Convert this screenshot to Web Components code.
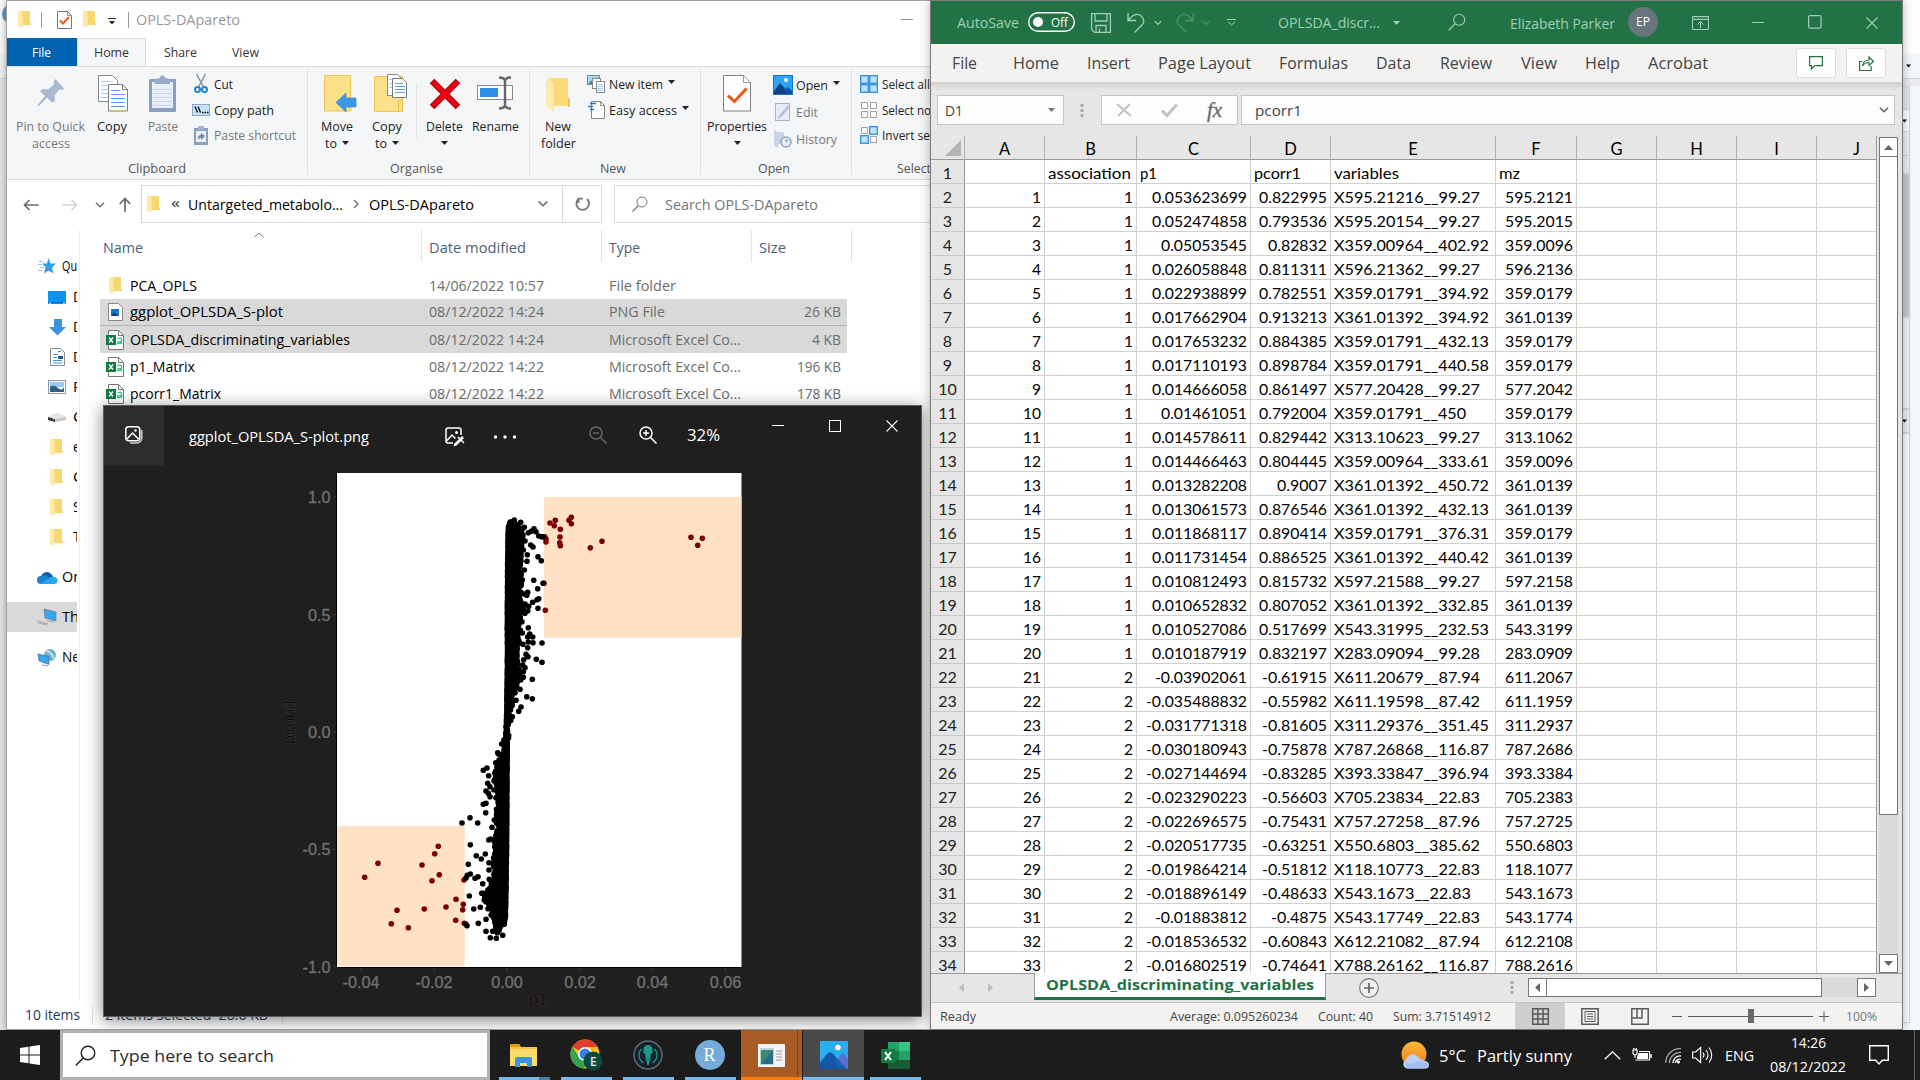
<!DOCTYPE html>
<html lang="en">
<head>
<meta charset="utf-8">
<title>Desktop</title>
<style>
html,body{margin:0;width:1920px;height:1080px;overflow:hidden;background:#e9ebed;font-family:"Open Sans","Noto Sans",sans-serif}
</style>
</head>
<body>
<desk-top></desk-top>
<script>
const ICONS = {
folder:[12,17,'<path d="M3 0h9v12h1v2H3z" fill="#f7d774"/><path d="M0 0h3l1.500 1.500V17L0 15z" fill="#ffe9a6"/>'],
bigfolder:[25,35,'<path d="M3 1h19v19l2 2v7H8z" fill="#fbd979"/><path d="M22 20l2 3v7h-2z" fill="#edc45c"/><path d="M0 1l8 5v29l-8-6z" fill="#ffe9ad"/>'],
checkdoc:[15,18,'<path d="M.5.5h10l4 4v13H.5z" fill="#fff" stroke="#777"/><path d="M10.500.5v4h4" fill="none" stroke="#999"/><path d="M3 9.500l3 3 6-6.500" fill="none" stroke="#f05a1a" stroke-width="2"/>'],
bigcheck:[29,37,'<path d="M.5.5h20l7 7v28.500H.5z" fill="#fdfdfd" stroke="#808080"/><path d="M20.500.5v7h7z" fill="#fff" stroke="#999"/><path d="M5 20.500l6.500 6 12-13" fill="none" stroke="#f0530f" stroke-width="3"/>'],
qat:[8,7,'<path d="M0 .5h8" stroke="#222" fill="none"/><path d="M1 3h6L4 6.500z" fill="#222"/>'],
vline:[1,16,'<path d="M.5 0v16" stroke="#999"/>'],
pin:[28,28,'<path d="M18.500 0l8.500 9.500-1.500 1.500-3-.5-5 6 .5 5-2.500 2.500-5.500-5.500L2 27l-1.500-1L8 17l-5-5 2.500-2 5.500.5 6-5-.5-3z" fill="#a9b9d0"/>'],
copy:[30,37,'<path d="M.5.5h14l5 5v21H.5z" fill="#fff" stroke="#8a8a8a"/><path d="M3 6.500h12M3 10.500h12M3 14.500h12M3 18.500h12M3 22.500h7" stroke="#a8cdf8"/><path d="M10.500 9.500h14l5 5V36H10.500z" fill="#fff" stroke="#808080"/><path d="M24.500 9.500v5h5" fill="none" stroke="#808080"/><path d="M13 15.500h9M13 19.500h14M13 23.500h14M13 27.500h14M13 31.500h14" stroke="#5b9cf0"/>'],
paste:[27,37,'<rect x="0" y="4" width="27" height="33" rx="1" fill="#8b9fc2"/><rect x="3" y="7" width="21" height="26" fill="#e9eef8"/><path d="M4 14.500h19M4 18.500h19M4 22.500h19M4 26.500h19M4 30.500h19" stroke="#cbd6ea"/><path d="M6 9V4l5-1a2.500 2.500 0 0 1 5 0l5 1v5z" fill="#9aabca"/>'],
cut:[14,20,'<path d="M2.500 0l7 13M11.500 0l-7 13" stroke="#8590a0" stroke-width="1.500" fill="none"/><circle cx="3.500" cy="15.500" r="2.500" fill="none" stroke="#1e87cf" stroke-width="2"/><circle cx="10.500" cy="15.500" r="2.500" fill="none" stroke="#1e87cf" stroke-width="2"/>'],
path:[18,12,'<rect x=".5" y=".5" width="17" height="11" fill="#c4e2fb" stroke="#8caac6"/><path d="M3 2.500l2.500 6M6 2.500l2.500 6" stroke="#000" stroke-width="1.300"/><path d="M10 8.500h1.500M12.500 8.500h1.500M15 8.500h1.500" stroke="#000" stroke-width="1.500"/>'],
shortcut:[14,19,'<rect y="2" width="14" height="17" fill="#8b9fc2"/><rect x="2" y="5" width="10" height="11" fill="#e9eef8"/><rect x="4" y="0" width="6" height="4" fill="#a3b2cd"/><path d="M4 14c0-4 1-5 3-5V7l4 3-4 4v-2c-1 0-2 .5-3 2z" fill="#7486ab"/>'],
moveto:[33,37,'<path d="M.5.5h26V36H.5z" fill="#fce08a" stroke="#e9c45c"/><path d="M24 22q3-3 4 1v13h-4z" fill="#fbd873"/><path d="M12 27.500l10-9.500v5h10v9H22v5z" fill="#3c97e8" stroke="#2b7ccb" stroke-width=".6"/>'],
copyto:[33,38,'<path d="M.5 2.500h28V37.500H.5z" fill="#fce08a" stroke="#e9c45c"/><path d="M24.500 37V27q2-3 4 0v10" fill="#fbdf85" stroke="#e9bd4c"/><path d="M13.500.5h10l4 4v17h-14z" fill="#fff" stroke="#888"/><path d="M15 5.500h8M15 9.500h8M15 13.500h5" stroke="#a8cdf8"/><path d="M18.500 4.500h10l4 4v15h-14z" fill="#fff" stroke="#777"/><path d="M21 9.500h8M21 12.500h10M21 15.500h10M21 18.500h10" stroke="#5b9cf0"/>'],
del:[32,32,'<path d="M3 3l26 26M29 3L3 29" stroke="#a40009" stroke-width="6.500"/><path d="M3.500 3.500l25 25M28.500 3.500l-25 25" stroke="#e60012" stroke-width="5"/>'],
rename:[37,34,'<rect x=".5" y="9.500" width="35" height="14" fill="#fff" stroke="#8a8a8a"/><rect x="3" y="12" width="18" height="9" fill="#2f8fe5"/><path d="M22 1.500q6 0 6 4 0-4 6-4M28 5v24M22 32.500q6 0 6-4 0 4 6 4" fill="none" stroke="#666" stroke-width="2.400"/>'],
newitem:[18,18,'<rect x=".5" y=".5" width="12" height="9" fill="#a9d4f4" stroke="#5c93b5"/><path d="M1 9l4-4 4 4z" fill="#4a8a62"/><rect x="5.500" y="3.500" width="8" height="10" fill="#fff" stroke="#888"/><rect x="9.500" y="6.500" width="8" height="11" fill="#fff" stroke="#888"/><path d="M11 9.500h5M11 11.500h5M11 13.500h5M11 15.500h5" stroke="#9cc4f4"/>'],
easy:[17,18,'<path d="M3.500.5h9l4 4v13h-13z" fill="#fff" stroke="#888"/><path d="M12.500.5v4h4" fill="none" stroke="#888"/><path d="M2 2.500h6M0 5.500h5M2 8.500h4" stroke="#2878c8" stroke-width="1.300"/>'],
openpic:[20,20,'<rect width="20" height="20" fill="#0c74d4"/><rect x="1" y="1" width="18" height="18" fill="#2da4f4"/><circle cx="13" cy="5" r="2" fill="#fff"/><path d="M1 16L7 8l6 6 2-2 4 4v3H1z" fill="#0f4fa0"/><path d="M1 19l6-10 8 10z" fill="#173f80"/>'],
edit:[17,19,'<rect x=".5" y="1.500" width="14" height="17" fill="#e7edf8" stroke="#a5b4cd"/><path d="M3 15L13 3l3 1L6 15l-3 2z" fill="#b4c1d8"/>'],
history:[18,18,'<path d="M0 0l4 2h6v12H4v4l-4-2z" fill="#c7d3e6"/><circle cx="12" cy="12" r="5" fill="#e6ecf6" stroke="#93a5c2" stroke-width="1.500"/><path d="M12 9v3l2-2" stroke="#8294b4" fill="none"/>'],
selall:[18,18,'<g fill="#bfe2fd" stroke="#2e8fe0" stroke-width="1.300"><rect x=".7" y=".7" width="7.600" height="7.600"/><rect x="9.700" y=".7" width="7.600" height="7.600"/><rect x=".7" y="9.700" width="7.600" height="7.600"/><rect x="9.700" y="9.700" width="7.600" height="7.600"/></g>'],
selnone:[18,18,'<g fill="#fafafa" stroke="#a3a3a3"><rect x="1.500" y="1.500" width="6" height="6"/><rect x="10.500" y="1.500" width="6" height="6"/><rect x="1.500" y="10.500" width="6" height="6"/><rect x="10.500" y="10.500" width="6" height="6"/></g>'],
selinv:[18,18,'<g fill="#fafafa" stroke="#a3a3a3"><rect x="1.500" y="1.500" width="6" height="6"/><rect x="10.500" y="10.500" width="6" height="6"/></g><g fill="#bfe2fd" stroke="#2e8fe0" stroke-width="1.300"><rect x="9.700" y=".7" width="7.600" height="7.600"/><rect x=".7" y="9.700" width="7.600" height="7.600"/></g>'],
tri:[7,4,'<path d="M0 0h7L3.500 4z" fill="currentColor"/>'],
back:[16,12,'<path d="M15.500 6H1.500M6.500 1l-5 5 5 5" stroke="currentColor" stroke-width="1.700" fill="none"/>'],
fwd:[16,12,'<path d="M0 6h14.500M9.500 1l5 5-5 5" stroke="currentColor" stroke-width="1.500" fill="none"/>'],
up:[12,15,'<path d="M6 15V1.500M.7 7L6 1.500 11.300 7" stroke="currentColor" stroke-width="1.700" fill="none"/>'],
chev:[10,6,'<path d="M1 .7l4 4 4-4" stroke="currentColor" stroke-width="1.600" fill="none"/>'],
chevr:[6,10,'<path d="M1 1l4 4-4 4" stroke="#777" stroke-width="1.500" fill="none"/>'],
chevup:[10,6,'<path d="M.5 5l4.500-4 4.500 4" stroke="#777" fill="none"/>'],
refresh:[16,16,'<path d="M4.500 2.500A6.300 6.300 0 1 0 12.500 3M4 7V2.700h4.500" transform="translate(-.5,0)" stroke="#777" stroke-width="1.800" fill="none"/>'],
mag:[16,16,'<circle cx="10" cy="6" r="5" stroke="currentColor" fill="none"/><path d="M6.500 9.500L.5 15.500" stroke="currentColor" stroke-width="1.200"/>'],
star:[19,16,'<path d="M10.500 0l2 5.500H18l-4 4 1.500 6-5-3-4.500 3L7.500 9 4 5.500h5z" fill="#2f9fe9"/><path d="M1 3.500h4M0 6.500h4M2 9.500h4M0 12.500h4" stroke="#8cc8f2"/>'],
desk:[18,13,'<rect width="18" height="13" fill="#0c93f0"/><path d="M0 11.500h18" stroke="#0565b5"/><path d="M1 12h2M15 12h2" stroke="#fff"/>'],
down:[17,17,'<path d="M5 0h8v8h4l-8.500 8.500L0 8h5z" fill="#3d90dc"/>'],
doc:[15,18,'<path d="M.5.5h10l4 4v13H.5z" fill="#fff" stroke="#888"/><path d="M3 6.500h5M3 9.500h4M3 12.500h9M3 15h9M8 3.500h3" stroke="#3c96dc"/><rect x="8" y="8" width="5" height="3" fill="#245a8a"/>'],
pics:[18,14,'<rect x=".5" y=".5" width="17" height="13" fill="#fff" stroke="#8f9aa5"/><rect x="2" y="2" width="14" height="5" fill="#9ac9f2"/><path d="M2 7q4-3 8 1t6-1v5H2z" fill="#2a5f86"/>'],
disk:[18,10,'<path d="M0 5L9 1l9 4v3L7 10 0 8z" fill="#c8c8c8"/><path d="M0 5l7 2v3L0 8z" fill="#333"/><path d="M0 5l9-4 9 4-11 2z" fill="#e4e4e4"/><circle cx="5.500" cy="8" r=".8" fill="#3c3"/>'],
cloud:[20,13,'<path d="M4 6a6 6 0 0 1 11-2l2 3L6 12z" fill="#0a5fb5"/><path d="M4 5a4 4 0 0 0 0 8l9-6-5-3z" fill="#1484d8"/><path d="M4 13h13a3.500 3.500 0 0 0 0-7q-3-1-5 1z" fill="#28a8ea"/>'],
pc:[20,16,'<path d="M7 0l12 3v9L8 9z" fill="#37a5f0" stroke="#6b7b8b" stroke-width=".7"/><path d="M0 12l11 3M1 14l9 2M10 12l7 1" stroke="#9aa5b0" fill="none"/>'],
net:[18,17,'<circle cx="12" cy="6" r="6" fill="#6bb3cf"/><path d="M8 2q5 0 8 8" stroke="#cfe8f0" stroke-width="1.500" fill="none"/><path d="M0 5l11 2.500v8L1 12z" fill="#37a5f0" stroke="#4f6f8b" stroke-width=".7"/><path d="M4 16l6 1" stroke="#9aa5b0"/>'],
png:[15,18,'<path d="M.5.5h10l4 4v13H.5z" fill="#fff" stroke="#888"/><rect x="3" y="6" width="8" height="7" fill="#1478d4"/><path d="M3 13l3-4 5 4z" fill="#123f7a"/>'],
csv:[18,20,'<path d="M2.500.5h10l5 5v14h-15z" fill="#fff" stroke="#777"/><path d="M12.500.5v5h5" fill="none" stroke="#777"/><rect y="5" width="10" height="10" fill="#107c41"/><path d="M3 7.500l4 5M7 7.500l-4 5" stroke="#fff" stroke-width="1.400"/><path d="M11.500 9q4-2 4 1v4M15 11.500q-4 0-3.500 1.500t3.500 0" stroke="#33c481" stroke-width="1.300" fill="none"/>'],
gallery:[18,18,'<rect x=".8" y=".8" width="14" height="14" rx="3" fill="none" stroke="#fff" stroke-width="1.500"/><path d="M2 13l5.500-6 6 6" fill="none" stroke="#fff" stroke-width="1.500"/><circle cx="10.500" cy="4.500" r="1.200" fill="#fff"/><path d="M16.800 4v8a5 5 0 0 1-5 5H5" fill="none" stroke="#ccc" stroke-width="1.500"/>'],
editpic:[19,20,'<path d="M16 8V3a2 2 0 0 0-2-2H3a2 2 0 0 0-2 2v11a2 2 0 0 0 2 2h5" fill="none" stroke="#fff" stroke-width="1.500"/><path d="M1.500 14L7 8l3.500 3.500" fill="none" stroke="#fff" stroke-width="1.500"/><circle cx="11.500" cy="5.500" r="1.500" fill="#fff"/><path d="M17 9l2 2-7.500 7.500-3 1 1-3z" fill="#fff"/><path d="M13 10l6 6" stroke="#fff" stroke-width="1.500"/>'],
dots:[24,4,'<circle cx="1.500" cy="2" r="1.700" fill="#fff"/><circle cx="11" cy="2" r="1.700" fill="#fff"/><circle cx="20.500" cy="2" r="1.700" fill="#fff"/>'],
zout:[18,18,'<circle cx="7" cy="7" r="6" fill="none" stroke="#666" stroke-width="1.500"/><path d="M11.500 11.500l6 6M4 7h6" stroke="#666" stroke-width="1.500"/>'],
zin:[18,18,'<circle cx="7" cy="7" r="6" fill="none" stroke="#fff" stroke-width="1.500"/><path d="M11.500 11.500l6 6M4 7h6M7 4v6" stroke="#fff" stroke-width="1.500"/>'],
min:[12,12,'<path d="M0 5.500h12" stroke="currentColor"/>'],
max:[12,12,'<rect x=".5" y=".5" width="11" height="11" fill="none" stroke="currentColor"/>'],
close:[12,12,'<path d="M.5.5l11 11M11.500.5l-11 11" stroke="currentColor" stroke-width="1.100"/>'],
save:[20,20,'<path d="M.6.600h18.800v18.800H3.500L.6 16.500zM4 1v7h12V1M5 19v-6.500h10V19M8.500 19v-3.500" fill="none" stroke="currentColor" stroke-width="1.300"/>'],
undo:[19,20,'<path d="M1 0v7.500h8M1.500 7C5 2 10 0 13.500 2.500S18 9 15 12L7.500 19.500" fill="none" stroke="currentColor" stroke-width="1.400"/>'],
redo:[19,20,'<path d="M18 0v7.500h-8M17.500 7C14 2 9 0 5.500 2.500S1 9 4 12l7.500 7.500" fill="none" stroke="currentColor" stroke-width="1.400"/>'],
cust:[9,7,'<path d="M0 .5h9M1 3l3.500 3L8 3" stroke="currentColor" fill="none"/>'],
toggle:[47,20,'<rect x=".7" y=".7" width="45.600" height="18.600" rx="9.300" fill="none" stroke="#fff" stroke-width="1.400"/><circle cx="10" cy="10" r="5" fill="#fff"/>'],
rdisp:[17,14,'<path d="M.5.5h16v13H.5zM.5 3.500h16M8.500 12V6M5.500 8.500l3-3 3 3" fill="none" stroke="currentColor"/><path d="M1 2h15" stroke="currentColor" opacity=".5"/>'],
rmax:[14,14,'<rect x=".6" y=".6" width="12.500" height="12.500" rx="1.500" fill="none" stroke="currentColor" stroke-width="1.200"/>'],
comment:[14,14,'<path d="M.6.600h12.800v9H6L2.500 13V9.600H.6z" fill="none" stroke="#217346" stroke-width="1.200"/>'],
share:[15,15,'<path d="M3.500 5.500H.6v9h11.500V10M3.500 10C4 6 6.500 4 10 4V1l4.500 4.500L10 9.500v-3C7 6.500 5 7.500 3.500 10z" fill="none" stroke="#217346" stroke-width="1.200"/>'],
vdots:[4,13,'<path d="M.5 0h3v3h-3zM.5 5h3v3h-3zM.5 10h3v3h-3z" fill="#a9a9a9"/>'],
fxx:[16,14,'<path d="M1 1l14 12M14 1L2 13" stroke="#c3c3c3" stroke-width="2.200"/>'],
fxc:[17,14,'<path d="M1 7.500l5 5L16 1.500" stroke="#c3c3c3" stroke-width="3" fill="none"/>'],
corner:[16,16,'<path d="M16 0v16H0z" fill="#b4b4b4"/>'],
triL:[5,9,'<path d="M5 0v9L0 4.500z" fill="currentColor"/>'],
triR:[5,9,'<path d="M0 0v9l5-4.500z" fill="currentColor"/>'],
triU:[9,5,'<path d="M0 5h9L4.500 0z" fill="currentColor"/>'],
triD:[9,5,'<path d="M0 0h9L4.500 5z" fill="currentColor"/>'],
plusc:[20,20,'<circle cx="10" cy="10" r="9.300" fill="#f0f0f0" stroke="#777" stroke-width="1.200"/><path d="M5 10h10M10 5v10" stroke="#666" stroke-width="1.700"/>'],
vgrid:[17,17,'<path d="M.7.700h15.600v15.600H.7zM.7 5.900h15.600M.7 11.100h15.600M5.900.7v15.600M11.100.7v15.600" fill="none" stroke="#5a5a58" stroke-width="1.500"/>'],
vpage:[18,17,'<path d="M.8.800h16.400v15.400H.8z" fill="none" stroke="#5a5a58" stroke-width="1.500"/><path d="M4 3.500h10v10H4z" fill="none" stroke="#5a5a58"/><path d="M6 6h6M6 8.500h6M6 11h6" stroke="#5a5a58"/>'],
vbreak:[18,17,'<path d="M.8.800h16.400v15.400H.8zM1 10h10V1M6 1v9" fill="none" stroke="#5a5a58" stroke-width="1.500"/>'],
slider:[158,14,'<path d="M0 7.500h10M16 7.500h125M147 7.500h10M152 2.500v10" stroke="#5a5a58"/><rect x="76" y="0" width="6" height="14" fill="#6a6a68"/>'],
win:[20,20,'<path d="M0 3l8.500-1.200V9.500H0zM9.500 1.600L20 0v9.500H9.500zM0 10.500h8.500v7.700L0 17zM9.500 10.500H20V20L9.500 18.400z" fill="#fff"/>'],
bigmag:[21,21,'<circle cx="13" cy="8" r="6.800" stroke="#222" stroke-width="1.400" fill="none"/><path d="M8.200 13L.8 20.500" stroke="#222" stroke-width="1.600"/>'],
texp:[28,24,'<path d="M0 1h9l2 3h16v19H0z" fill="#f8c440"/><path d="M0 6h27v17H0z" fill="#fdda6c"/><path d="M0 1h9l1.500 3H0z" fill="#dd9b12"/><path d="M5 24v-8q0-2 2-2h13q2 0 2 2v8h-5v-4h-7v4z" fill="#3b94de"/>'],
chrome:[33,32,'<circle cx="15" cy="15" r="14.500" fill="#fbc116"/><path d="M2.500 7.500A14.500 14.500 0 0 1 27.600 8H15z" fill="#e33b2e"/><path d="M2.500 7.700L15 15v-7h12.500a15 15 0 0 0-25-.3z" fill="#e33b2e"/><path d="M2.400 7.700A14.500 14.500 0 0 0 13.500 29.500L20 19l-11-1z" fill="#32a350"/><circle cx="15" cy="15" r="7" fill="#fff"/><circle cx="15" cy="15" r="5.500" fill="#3a7ee8"/><circle cx="23" cy="22" r="9.500" fill="#0c4a3e"/><text x="20" y="26.500" font-family="Open Sans" font-size="12" font-weight="600" fill="#dfeee8">E</text>'],
kraken:[30,30,'<circle cx="15" cy="15" r="14" fill="#15202b" stroke="#5c6a74" stroke-width="1.500"/><path d="M15 5c4 0 5 4 4.500 7.500L17.500 15v8l-.8-5-.8 7h-1.800l-.8-7-.8 5v-8l-2-2.500C10 9 11 5 15 5z" fill="#1a9a88"/><path d="M8.500 9c-4 4-3 11 2 14M21.500 9c4 4 3 11-2 14" stroke="#1a9a88" stroke-width="1.300" fill="none"/>'],
rr:[30,30,'<circle cx="15" cy="15" r="15" fill="#75aadb"/><text x="8.500" y="21" font-family="Liberation Serif" font-size="18" fill="#fff">R</text>'],
appw:[27,23,'<rect width="27" height="23" rx="1" fill="#f4f4f4"/><rect x="2" y="4" width="14" height="17" fill="#b9d4de"/><path d="M3 6h12v14H3z" fill="#3f8a6c"/><path d="M3 20L15 6v14z" fill="#2b6c8c"/><path d="M18 7h6M18 10h6M18 13h6M18 16h6" stroke="#999"/>'],
photos:[28,28,'<rect width="28" height="28" rx="1" fill="#29aef0"/><path d="M11 28L22 12q3 0 6 6v10z" fill="#5b6fd0"/><path d="M0 22L8 12q3-2 6 2l13 14H0z" fill="#1b5fb4"/><path d="M0 22L8 12q3-2 6 2l4 14H0z" fill="#1656a8"/><circle cx="18" cy="6.500" r="2.700" fill="#fff"/>'],
xl:[29,27,'<rect x="7" width="22" height="27" rx="1.500" fill="#21a366"/><path d="M7 0h11v9H7z" fill="#21a366"/><path d="M18 0h11v9H18z" fill="#33c481"/><path d="M7 9h11v9H7z" fill="#107c41"/><path d="M7 18h22v9H7z" fill="#185c37"/><rect y="7" width="14" height="14" rx="1" fill="#107c41"/><path d="M4 10l6 8M10 10l-6 8" stroke="#fff" stroke-width="2"/>'],
weather:[29,28,'<defs><linearGradient id="g" x2="0" y2="1"><stop offset="0" stop-color="#f9b93a"/><stop offset="1" stop-color="#f0801a"/></linearGradient></defs><circle cx="13" cy="13" r="12.500" fill="url(#g)"/><path d="M6 27.500a4.500 4.500 0 0 1-1-8.500 7 7 0 0 1 7-5.500q5 0 6.500 4.500 3-.5 4 1.500 5.500.5 5.500 4.500t-4 3.500z" fill="#bfd0f5"/><path d="M6 27.500a4.500 4.500 0 0 1 0-6q4 2 8 0 5-3 9-1 4 1 4.500 3.500 0 3.500-4 3.500z" fill="#a4bcf0"/>'],
caret:[17,9,'<path d="M.7 8.300l7.800-7.500 7.800 7.500" stroke="#fff" stroke-width="1.300" fill="none"/>'],
batt:[20,14,'<path d="M1 2v3a2 2 0 0 0 4 0V2zM1.800 0v2M4.200 0v2M3 7v3" stroke="#fff" fill="none" stroke-width="1.200"/><path d="M7 3.500h10.500V12H3.500" fill="none" stroke="#fff" stroke-width="1.200"/><path d="M6.500 5h9.500v6H5V8.500z" fill="#fff"/><path d="M19 6v4" stroke="#fff" stroke-width="1.500"/>'],
wifi:[17,16,'<path d="M.7 15A14.300 14.300 0 0 1 16 .7M4.500 15A10.500 10.500 0 0 1 16 4.500" stroke="#aaa" fill="none" stroke-width="1.300"/><path d="M8 15a7 7 0 0 1 8-7M10.500 15a4 4 0 0 1 5.500-3.500" stroke="#fff" fill="none" stroke-width="1.300"/><circle cx="13.500" cy="14" r="1.500" fill="#fff"/>'],
vol:[21,18,'<path d="M.6 6h3l5-4.500v15L3.600 12h-3z" fill="none" stroke="#fff" stroke-width="1.200"/><path d="M11 6.500q2 2.500 0 5M14 4q4 5 0 10M17 1.500q5.500 7.500 0 15" stroke="#fff" fill="none" stroke-width="1.100"/>'],
notif:[20,20,'<path d="M.7.700h18.600v14.600h-6L10 19l-3.300-3.700h-6z" fill="none" stroke="#fff" stroke-width="1.400"/>']
};

class Base extends HTMLElement{
  connectedCallback(){
    if(this.shadowRoot) return;
    const r=this.attachShadow({mode:'open'});
    const t=document.createElement('template');
    t.innerHTML='<style>'+this.css()+'</style>'+this.html();
    r.appendChild(t.content.cloneNode(true));
    this.ready&&this.ready(r);
  }
  css(){return ':host{display:block}'}
  html(){return '<slot></slot>'}
  a(n,d=''){return this.getAttribute(n)??d}
}
const def=(n,c)=>customElements.define(n,c);

/* icon from the sheet above */
def('i-c',class extends Base{
  css(){const [w,h]=ICONS[this.a('n')];return `:host{display:block;flex:none;width:${w}px;height:${h}px}svg{display:block;overflow:visible}`}
  html(){const [w,h,s]=ICONS[this.a('n')];return `<svg width="${w}" height="${h}" viewBox="0 0 ${w} ${h}">${s}</svg>`}
});
/* single line of text condensed or widened to a set width */
def('t-x',class extends Base{
  css(){const w=this.a('w');return `:host{display:block;flex:none;white-space:pre;line-height:20px;font-size:${this.a('s',14.5)}px;color:${this.a('c','inherit')};${w?`width:${w}px`:''}}span{display:inline-block;transform-origin:0 50%}`}
  html(){return '<span><slot></slot></span>'}
  ready(r){const w=+this.a('w');if(!w)return;const s=r.querySelector('span');const n=s.getBoundingClientRect().width;if(n)s.style.transform=`scaleX(${w/n})`}
});
/* row whose tracks start at the given x positions */
def('x-row',class extends Base{
  css(){const p=this.a('at','0').split(' ').map(Number);const o=+this.a('o',0);
    return `:host{display:grid;box-sizing:border-box;align-items:${this.a('al','center')};justify-items:start;height:${this.a('h',20)}px;padding-left:${p[0]-o}px;grid-template-columns:${p.slice(1).map((v,i)=>(v-p[i])+'px').join(' ')} 1fr}`}
});
def('rb-group',class extends Base{
  css(){return `:host{display:flex;flex:none;flex-direction:column;box-sizing:border-box;width:${this.a('w')}px;height:112px;background:linear-gradient(#dfe1e4,#dfe1e4) right 2px/1px 106px no-repeat;background-position:right 2px}.b{height:91px}`}
  html(){return `<div class="b"><slot></slot></div><x-row o="${this.a('o')}" at="${this.a('lx')}"><t-x w="${this.a('lw')}" s="13" c="#555">${this.a('label')}</t-x></x-row>`}
});
def('rb-big',class extends Base{
  css(){return `:host{display:flex;flex-direction:column;align-items:center;width:${this.a('w')}px;color:${this.a('c','#222')}}.i{height:${this.a('ih',45)}px;display:flex;align-items:flex-end;margin-left:${this.a('ix',0)}px;margin-bottom:${this.a('ib',5)}px}.l{display:flex;align-items:center;gap:5px;height:17px}`}
  html(){const ar='<i-c n="tri"></i-c>';const l2=this.a('l2');
    return `<div class="i"><i-c n="${this.a('n')}"></i-c></div><div class="l"><t-x s="13" w="${this.a('w1')}">${this.a('l1')}</t-x></div><div class="l">${l2?`<t-x s="13" w="${this.a('w2')}">${l2}</t-x>`:''}${this.hasAttribute('ar')?ar:''}</div>`}
});
def('rb-small',class extends Base{
  css(){return `:host{display:flex;align-items:center;height:${this.a('h',25.7)}px;color:${this.a('c','#222')}}.i{width:${this.a('iw',22)}px;display:flex;justify-content:center;margin-right:2px}i-c.t{margin-left:5px;margin-top:-3px}`}
  html(){return `<div class="i"><i-c n="${this.a('n')}"></i-c></div><t-x s="13" w="${this.a('w')}"><slot></slot></t-x>${this.hasAttribute('ar')?'<i-c class="t" n="tri"></i-c>':''}`}
});
def('ex-ribbon',class extends Base{
  css(){return `:host{display:flex;height:112px;background:#f5f6f7;border-top:1px solid #d9dbdc;border-bottom:1px solid #d9dbdc}.v{width:1px;height:55px;background:#dfe1e4;margin-top:17px}.s{padding-top:4px}`}
  html(){return `
<rb-group w="301" o="7" label="Clipboard" lx="128" lw="58"><x-row al="start" h="91" o="7" at="12.5 87 142.500 190">
 <rb-big w="76" n="pin" ih="40" ib="10" ix="1" w1="69" l1="Pin to Quick" w2="38" l2="access" c="#777"></rb-big>
 <rb-big w="50" n="copy" ix="1" w1="30" l1="Copy"></rb-big><rb-big w="40" n="paste" w1="30" l1="Paste" c="#777"></rb-big>
 <div class="s"><rb-small n="cut" w="19">Cut</rb-small><rb-small n="path" w="60">Copy path</rb-small><rb-small n="shortcut" w="82" c="#777">Paste shortcut</rb-small></div></x-row></rb-group>
<rb-group w="222" o="308" label="Organise" lx="390" lw="53"><x-row al="start" h="91" o="308" at="316.5 366.500 416 422.500 468.500">
 <rb-big w="40" n="moveto" ix="7" w1="32" l1="Move" w2="12" l2="to" ar></rb-big><rb-big w="40" n="copyto" ix="7" w1="30" l1="Copy" w2="12" l2="to" ar></rb-big><div class="v"></div>
 <rb-big w="44" n="del" ih="43" ib="7" w1="37" l1="Delete" ar></rb-big><rb-big w="54" n="rename" ih="43" ib="7" w1="47" l1="Rename"></rb-big></x-row></rb-group>
<rb-group w="171" o="530" label="New" lx="600" lw="26"><x-row al="start" h="91" o="530" at="538 585">
 <rb-big w="40" n="bigfolder" w1="26" l1="New" w2="35" l2="folder"></rb-big>
 <div class="s"><rb-small n="newitem" w="54" ar>New item</rb-small><rb-small n="easy" w="68" ar>Easy access</rb-small></div></x-row></rb-group>
<rb-group w="151" o="701" label="Open" lx="758" lw="32"><x-row al="start" h="91" o="701" at="705 772">
 <rb-big w="64" n="bigcheck" w1="60" l1="Properties" ar></rb-big>
 <div class="s"><rb-small h="27" n="openpic" w="32" ar>Open</rb-small><rb-small h="27" n="edit" w="22" c="#777">Edit</rb-small><rb-small h="27" n="history" w="41" c="#777">History</rb-small></div></x-row></rb-group>
<rb-group w="120" o="852" label="Select" lx="897" lw="34"><x-row al="start" h="91" o="852" at="858"><div class="s"><rb-small n="selall" w="48">Select all</rb-small><rb-small n="selnone" w="49">Select no</rb-small><rb-small n="selinv" w="48">Invert se</rb-small></div></x-row></rb-group>`}
});
const NAV=[['star',38,62,'Qu',15,33],['desk',48,73,'D',10,30],['down',49,73,'D',10,30],['doc',50,73,'D',10,30],['pics',48,73,'P',9,30],['disk',48,73,'C',10,30],['folder',50,73,'e',8,30],['folder',50,73,'C',10,30],['folder',50,73,'S',8,30],['folder',50,73,'T',8,30],['cloud',37,62,'On',20,50],['pc',37,62,'Th',17,30],['net',38,62,'Ne',18,50]];
def('nav-pane',class extends Base{
  css(){return `:host{display:block;width:70px;overflow:hidden;padding-top:19px;color:#000;height:715px}.sel{background:#d9d9d9}`}
  html(){return NAV.map(([n,a,b,t,w,h])=>`<x-row class="${t=='Th'?'sel':''}" h="${h}" o="7" at="${a} ${b}"><i-c n="${n}"></i-c><t-x w="${w}">${t}</t-x></x-row>`).join('')}
});
const FILES=[['folder','PCA_OPLS',67,'14/06/2022 10:57','File folder',67,'',0],['png','ggplot_OPLSDA_S-plot',153,'08/12/2022 14:24','PNG File',56,'26 KB',37],['csv','OPLSDA_discriminating_variables',220,'08/12/2022 14:24','Microsoft Excel Co...',132,'4 KB',29],['csv','p1_Matrix',65,'08/12/2022 14:22','Microsoft Excel Co...',132,'196 KB',44],['csv','pcorr1_Matrix',91,'08/12/2022 14:22','Microsoft Excel Co...',132,'178 KB',44]];
def('file-list',class extends Base{
  css(){return `:host{display:block;flex:1;border-left:1px solid #eee}.h{display:grid;grid-template-columns:342px 180px 150px 100px;height:33px;color:#4c607a}.h div{border-right:1px solid #e2e2e2;box-sizing:border-box;height:32px;padding-top:8px}
.r{height:27px;width:747px;margin-left:20px}.s{background:#d9d9d9}.l{border-bottom:1px solid #b4b4b4;box-sizing:border-box}.gap{height:9px}.z{width:83px;display:flex;justify-content:flex-end}i-c{justify-self:center}`}
  html(){return `<div class="h"><div style="padding-left:23px"><t-x w="40">Name</t-x></div><div style="padding-left:7px"><t-x w="97">Date modified</t-x></div><div style="padding-left:7px"><t-x w="31">Type</t-x></div><div style="padding-left:7px"><t-x w="27">Size</t-x></div></div><div class="gap"></div>`+
  FILES.map((f,i)=>`<div class="r ${i==1?'s l':i==2?'s':''}"><x-row h="${i==1?26:27}" o="100" at="104 130 429 609 758"><i-c n="${f[0]}" style="margin-left:-4px"></i-c><t-x c="#000" w="${f[2]}">${f[1]}</t-x><t-x c="#6d6d6d" w="115">${f[3]}</t-x><t-x c="#6d6d6d" w="${f[5]}">${f[4]}</t-x><div class="z">${f[7]?`<t-x c="#6d6d6d" w="${f[7]}">${f[6]}</t-x>`:''}</div></x-row></div>`).join('')}
});
def('file-explorer',class extends Base{
  css(){return `:host{display:flex;flex-direction:column;position:absolute;left:6px;top:0;width:924px;height:1028px;background:#fff;border:1px solid #a0a0a0;border-right:0;overflow:hidden;box-shadow:0 0 9px rgba(0,0,0,.35)}
.tabs{display:flex;height:28px;align-items:stretch}.tabs div{display:flex;align-items:center;justify-content:center;box-sizing:border-box;padding-right:1px}.f{width:70px;background:#0063b1;color:#fff}.tabs .hm{width:69px;background:#f5f6f7;border:1px solid #d9dbdc;border-bottom:0;margin-bottom:-1px;padding-bottom:2px}
.ad{height:50px;display:flex;align-items:flex-start;padding-top:5px;box-sizing:border-box}.nv{width:134px;flex:none}.bx{border:1px solid #d9d9d9;height:36px;box-sizing:content-box;flex:none}.main{display:flex;flex:1;color:#000}.st{color:#1e3a5c}.sp{width:1px;height:20px;background:#e4e4e4}
.sort{height:0;display:flex;padding-left:247px}.sort i-c{margin-top:2px}`}
  html(){return `
<x-row h="37" o="7" at="18 41 57 83 108 128 136 901"><i-c n="folder"></i-c><i-c n="vline"></i-c><i-c n="checkdoc"></i-c><i-c n="folder"></i-c><i-c n="qat" style="margin-top:3px"></i-c><i-c n="vline"></i-c><t-x w="104" c="#999" s="15" style="margin-top:-2px">OPLS-DApareto</t-x><i-c n="min" style="color:#999"></i-c></x-row>
<div class="tabs"><div class="f"><t-x s="13" w="19">File</t-x></div><div class="hm"><t-x s="13" w="35" c="#333">Home</t-x></div><div style="width:69px"><t-x s="13" w="33" c="#333">Share</t-x></div><div style="width:61px"><t-x s="13" w="27" c="#333">View</t-x></div></div>
<ex-ribbon></ex-ribbon>
<div class="ad"><div class="nv"><x-row h="39" o="7" at="23 62 95 119"><i-c n="back" style="color:#6b6b6b"></i-c><i-c n="fwd" style="color:#d4d4d4"></i-c><i-c n="chev" style="color:#777"></i-c><i-c n="up" style="color:#6b6b6b"></i-c></x-row></div>
<div class="bx" style="width:420px"><x-row h="36" o="142" at="147 171 188 353 369 538"><i-c n="folder"></i-c><t-x s="15" w="9" c="#333" style="margin-top:-5px">«</t-x><t-x w="155" s="15">Untargeted_metabolo...</t-x><i-c n="chevr"></i-c><t-x w="105" s="15">OPLS-DApareto</t-x><i-c n="chev" style="color:#777;transform:scale(1.1)"></i-c></x-row></div><div class="bx" style="width:38px;margin-left:-1px"><x-row h="36" at="12"><i-c n="refresh"></i-c></x-row></div>
<div class="bx" style="margin-left:12px;width:330px"><x-row h="36" o="615" at="632 665"><i-c n="mag" style="color:#777"></i-c><t-x w="153" s="15" c="#757575">Search OPLS-DApareto</t-x></x-row></div></div>
<div class="sort"><i-c n="chevup"></i-c></div>
<div class="main"><nav-pane></nav-pane><div style="width:2px"></div><file-list></file-list></div>
<x-row class="st" h="28" o="7" at="25 92 105 282"><t-x w="55">10 items</t-x><div class="sp"></div><t-x w="163">2 items selected  28.6 KB</t-x><div class="sp"></div></x-row>`}
});

/* scatter plot, point lists are in thirds of a pixel */
const UR=[286,121,270,129,283,137,334,112,327,121,334,131,301,148,300,171,299,188,301,197,254,170,258,176,258,186,426,184,391,203,693,172,727,175,713,196,252,310,256,391];
const LR=[535,319,524,341,354,370,486,375,314,412,538,404,516,422,612,420,588,478,610,493,608,509,558,501,493,507,411,511,394,551,445,563,587,541,613,550];
const UB=[163,120,182,127,193,142,205,158,222,146,228,155,214,154,236,168,245,170,212,195,219,201,195,183,190,210,202,224,201,244,183,230,183,243,234,230,244,242,193,270,187,300,221,301,233,326,203,337,200,346,192,342,231,359,236,356,218,367,206,379,195,372,234,385,203,393,195,400,188,385,181,412,186,425,205,443,209,462,218,471,203,471,187,459,219,488,205,486,246,489,203,503,189,493,198,523,204,530,191,539,229,538,246,547,195,563,188,555,190,575,190,592,182,600,217,598,180,628,168,620,165,638,168,661,200,650,217,656,183,681,176,694,157,710,155,677,249,170,249,310,152,125,150,128];
const LB=[725,12,713,38,717,43,707,68,681,84,670,91,686,107,683,130,678,153,690,140,690,170,702,150,685,160,670,193,678,190,677,218,630,233,606,249,653,249,703,240,696,262,686,300,692,297,631,314,649,347,676,342,664,357,625,373,687,368,700,370,687,390,622,406,631,402,645,415,654,410,688,418,699,420,668,431,628,468,665,460,641,507,661,502,684,506,678,538,655,550,621,557,678,574,698,574,712,578,691,593,709,595,728,586,618,414,617,552];
def('s-plot',class extends Base{
  css(){return ':host{display:block}svg{display:block}text{font-family:"Liberation Sans",Arial,sans-serif;font-size:16.2px;fill:#747474;stroke:#6a6a6a;stroke-width:.35}.ax{fill:#0c0c0c;stroke:#5f564e;stroke-width:.5;paint-order:stroke}'}
  html(){
    const c=(a,ox,oy,f)=>{let s='';for(let i=0;i<a.length;i+=2)s+=`<circle cx="${(a[i]/3+ox).toFixed(1)}" cy="${(a[i+1]/3+oy).toFixed(1)}" r="2.8" fill="${f}"/>`;return s};
    let seed=7;const rnd=()=>(seed=(seed*16807)%2147483647)/2147483647;
    const edge=(p,ox,oy,j)=>{let s='';for(let i=0;i+3<p.length;i+=2){const n=Math.ceil(Math.hypot(p[i+2]-p[i],p[i+3]-p[i+1])/8);for(let k=0;k<n;k++){const t=k/n;s+=`<circle cx="${((p[i]+(p[i+2]-p[i])*t+(rnd()-.5)*j)/3+ox).toFixed(1)}" cy="${((p[i+1]+(p[i+3]-p[i+1])*t)/3+oy).toFixed(1)}" r="2.8"/>`}}return s};
    const poly=(p,ox,oy)=>{let s='';for(let i=0;i<p.length;i+=2)s+=(p[i]/3+ox)+','+(p[i+1]/3+oy)+' ';return `<polygon points="${s}"/>`};
    const ru=[160,130,184,145,186,165,182,190,180,220,176,260,180,290,178,330,183,365,188,390,178,420,176,450,174,480,172,520,172,560,176,595,165,620,156,645,155,665,148,690,148,715,142,740,141,780];
    const lu=[150,128,145,140,143,250,142,400,142,560,140,700,138,780];
    const ll=[735,0,732,30,722,60,714,80,707,100,706,130,712,160,714,200,714,280,704,300,706,340,704,380,706,410,694,440,674,460,678,480,696,500,694,525,704,550,712,568,722,575];
    const rl=[742,0,741,130,740,300,738,450,736,530,731,560];
    const rev=a=>{const o=[];for(let i=a.length-2;i>=0;i-=2)o.push(a[i],a[i+1]);return o};
    const xl=[['-0.04',361],['-0.02',434],['0.00',507],['0.02',580],['0.04',652.5],['0.06',725.5]];
    const yl=[['1.0',497],['0.5',614.6],['0.0',732],['-0.5',849.3],['-1.0',966.7]];
    return `<svg width="818" height="549" viewBox="104 467 818 549">
<rect x="337" y="473" width="404.500" height="494" fill="#fff"/><rect x="544" y="497" width="197.500" height="140.600" fill="#ffe1c6"/><rect x="337.500" y="826" width="127.200" height="140.500" fill="#ffe1c6"/>
<path d="M336.500 473v494M336 967.500h405.500" stroke="#000" fill="none"/>
<g stroke="#3a3a3a">${xl.map(l=>`<path d="M${l[1]} 968v3.500"/>`).join('')}${yl.map(l=>`<path d="M332.500 ${l[1]}h3.500"/>`).join('')}</g>
${poly(lu.concat(rev(ru)),460,480)}${poly([735,0,747,0,747,-45,733,-30],260,740)}
${edge(ru,460,480,11)}${edge(lu,460,480,1)}${poly(ll.concat(rev(rl)),260,740)}${edge(ll,260,740,10)}${edge(rl,260,740,1)}
${c(UR,460,480,'#7d0000')}${c(LR,260,740,'#7d0000')}${c(UB,460,480,'#000')}${c(LB,260,740,'#000')}
${xl.map(l=>`<text x="${l[1]}" y="988" text-anchor="middle">${l[0]}</text>`).join('')}${yl.map(l=>`<text x="330.500" y="${l[1]+6}" text-anchor="end">${l[0]}</text>`).join('')}
<text class="ax" x="538" y="1005" text-anchor="middle">p1</text><text class="ax" transform="translate(295,721) rotate(-90)" text-anchor="middle">pcorr1</text></svg>`}
});
def('photo-viewer',class extends Base{
  css(){return `:host{display:block;position:absolute;left:103px;top:405px;width:817px;height:610px;background:#1f1f1f;border:1px solid #5c5c5c;box-shadow:0 3px 16px rgba(0,0,0,.5);color:#fff;overflow:hidden}.t{display:flex;height:61px}.g{width:60px;height:60px;background:#2c2c2c;display:flex;align-items:center;justify-content:center}x-row{flex:1}`}
  html(){return `<div class="t"><div class="g"><i-c n="gallery" style="margin-top:-2px"></i-c></div><x-row h="61" o="164" at="189 445 494 589 639 687 772 829 886"><t-x w="180" s="15" style="margin-top:-2px">ggplot_OPLSDA_S-plot.png</t-x><i-c n="editpic"></i-c><i-c n="dots"></i-c><i-c n="zout" style="margin-top:-3px"></i-c><i-c n="zin" style="margin-top:-3px"></i-c><t-x w="33" s="17" style="margin-top:-4px">32%</t-x><i-c n="min" style="margin-top:-21px"></i-c><i-c n="max" style="margin-top:-21px"></i-c><i-c n="close" style="margin-top:-21px"></i-c></x-row></div><s-plot></s-plot>`}
});

const ROWS=`1 0.053623699 0.822995 X595.21216__99.27 595.2121
1 0.052474858 0.793536 X595.20154__99.27 595.2015
1 0.05053545 0.82832 X359.00964__402.92 359.0096
1 0.026058848 0.811311 X596.21362__99.27 596.2136
1 0.022938899 0.782551 X359.01791__394.92 359.0179
1 0.017662904 0.913213 X361.01392__394.92 361.0139
1 0.017653232 0.884385 X359.01791__432.13 359.0179
1 0.017110193 0.898784 X359.01791__440.58 359.0179
1 0.014666058 0.861497 X577.20428__99.27 577.2042
1 0.01461051 0.792004 X359.01791__450 359.0179
1 0.014578611 0.829442 X313.10623__99.27 313.1062
1 0.014466463 0.804445 X359.00964__333.61 359.0096
1 0.013282208 0.9007 X361.01392__450.72 361.0139
1 0.013061573 0.876546 X361.01392__432.13 361.0139
1 0.011868117 0.890414 X359.01791__376.31 359.0179
1 0.011731454 0.886525 X361.01392__440.42 361.0139
1 0.010812493 0.815732 X597.21588__99.27 597.2158
1 0.010652832 0.807052 X361.01392__332.85 361.0139
1 0.010527086 0.517699 X543.31995__232.53 543.3199
1 0.010187919 0.832197 X283.09094__99.28 283.0909
2 -0.03902061 -0.61915 X611.20679__87.94 611.2067
2 -0.035488832 -0.55982 X611.19598__87.42 611.1959
2 -0.031771318 -0.81605 X311.29376__351.45 311.2937
2 -0.030180943 -0.75878 X787.26868__116.87 787.2686
2 -0.027144694 -0.83285 X393.33847__396.94 393.3384
2 -0.023290223 -0.56603 X705.23834__22.83 705.2383
2 -0.022696575 -0.75431 X757.27258__87.96 757.2725
2 -0.020517735 -0.63251 X550.6803__385.62 550.6803
2 -0.019864214 -0.51812 X118.10773__22.83 118.1077
2 -0.018896149 -0.48633 X543.1673__22.83 543.1673
2 -0.01883812 -0.4875 X543.17749__22.83 543.1774
2 -0.018536532 -0.60843 X612.21082__87.94 612.2108
2 -0.016802519 -0.74641 X788.26162__116.87 788.2616`.split('\n').map((l,i)=>[String(i+1),...l.split(' ')]);
const cw=s=>[...s].reduce((n,ch)=>n+(ch=='.'?5:ch=='-'?6:ch=='X'?10:9),0);
def('sheet-grid',class extends Base{
  css(){return `:host{display:block;flex:none;width:946px;height:837px;overflow:hidden;font-family:Lato,"Open Sans",sans-serif;color:#000}
.r{display:grid;grid-template-columns:34px 80px 92px 114px 80px 165px 81px 80px 80px 80px 60px;height:24px}
.r>div{border-right:1px solid #d0d0d0;border-bottom:1px solid #d0d0d0;background:#fff;display:flex;align-items:center;box-sizing:border-box;padding:2px 3px 0 3px;overflow:hidden}
.r>.n{background:#e6e6e6;border-right-color:#999;border-bottom-color:#c8c8c8;justify-content:center;color:#222;padding:2px 0 0}
.h>div{background:#e6e6e6;border-right-color:#b0b0b0;border-bottom:1px solid #999;justify-content:center;padding:2px 0 0}
.h>div:first-child{justify-content:flex-end;padding:0 3px 0 0}.e{justify-content:flex-end}.r>div:last-child{border-right-color:#999}`}
  html(){
    const N=(s)=>`<div class="e"><t-x s="16" w="${cw(s)}">${s}</t-x></div>`,L=(s,w)=>`<div><t-x s="16" w="${w}">${s}</t-x></div>`,E='<div></div>'.repeat(4);
    return `<div class="r h"><div><i-c n="corner"></i-c></div>${'ABCDEFGHI'.split('').map(x=>`<div><t-x s="16.500">${x}</t-x></div>`).join('')}<div style="padding-left:20px"><t-x s="16.500">J</t-x></div></div>`+
    `<div class="r"><div class="n"><t-x s="16">1</t-x></div><div></div>${L('association',83)}${L('p1',17)}${L('pcorr1',47)}${L('variables',65)}${L('mz',21)}${E}</div>`+
    ROWS.map((r,i)=>`<div class="r"><div class="n"><t-x s="16">${i+2}</t-x></div>${N(r[0])}${N(r[1])}${N(r[2])}${N(r[3])}${L(r[4],cw(r[4]))}${N(r[5])}${E}</div>`).join('')}
});
def('excel-window',class extends Base{
  css(){return `:host{display:flex;flex-direction:column;position:absolute;left:930px;top:0;width:971px;height:1028px;border:1px solid #7a7a7a;background:#e6e6e6;box-shadow:0 0 10px rgba(0,0,0,.3);overflow:hidden}
.tt{background:#217346;color:#a3cfb4}.mn{background:#f3f2f1;color:#444}.sh{height:8px;background:linear-gradient(#cfcfcf,#e6e6e6);margin-bottom:5px}
.av{width:30px;height:30px;border-radius:50%;background:#67767c;color:#fff;display:flex;align-items:center;justify-content:center}.tg{display:flex;margin-top:-2px}.tg t-x{margin-left:-24px;width:17px}
.bt{width:38px;height:28px;border:1px solid #dcdcdc;border-radius:3px;background:#fff;display:flex;align-items:center;justify-content:center}
.bx{background:#fdfdfd;border:1px solid #c6c6c6;height:28px}.fb{display:flex;height:41px;align-items:flex-start;color:#444}
.body{display:flex;height:837px}.vs{width:19px;margin:1px 0 0 2px;display:flex;flex-direction:column;align-items:stretch}.b{border:1px solid #777;background:#fff;box-sizing:border-box;display:flex;align-items:center;justify-content:center;color:#666}
.tab{background:#fff;width:290px;border:1px solid #999;border-top:0;border-bottom:3px solid #217346;height:23px;display:flex;justify-content:center;margin-top:-1px;padding-top:1px;font-weight:700;color:#217346}
.tb{border-top:1px solid #999;box-sizing:border-box}.hs{display:flex;width:348px}.stt{background:#f3f2f1;border-top:1px solid #c4c4c4;color:#444}.vb{width:50px;height:26px;background:#d0cfcd;display:flex;align-items:center;justify-content:center}
.fx{font:italic 21px/20px "Liberation Serif",serif;color:#666;-webkit-text-stroke:.4px #777}`}
  html(){return `
<x-row class="tt" h="43" o="931" at="957 1028 1091 1127 1153 1175 1201 1227 1278 1393 1449 1510 1628 1692 1752 1808 1866"><t-x w="62" s="15" style="margin-top:-2px">AutoSave</t-x><div class="tg"><i-c n="toggle"></i-c><t-x w="17" s="13.500" c="#fff">Off</t-x></div><i-c n="save"></i-c><i-c n="undo"></i-c><i-c n="chev" style="transform:scale(.8)"></i-c><i-c n="redo" style="opacity:.35"></i-c><i-c n="chev" style="opacity:.35;transform:scale(.8)"></i-c><i-c n="cust"></i-c><t-x w="102" s="15" style="margin-top:-2px">OPLSDA_discr...</t-x><i-c n="tri"></i-c><i-c n="mag" style="transform:scale(1.1);margin-top:-2px"></i-c><t-x w="105" s="15">Elizabeth Parker</t-x><div class="av" style="margin-top:-1px"><t-x w="14" s="12">EP</t-x></div><i-c n="rdisp"></i-c><i-c n="min"></i-c><i-c n="rmax" style="margin-top:-1px"></i-c><i-c n="close"></i-c></x-row>
<x-row class="mn" h="38" o="931" at="952 1013 1087 1158 1279 1376 1440 1521 1585 1648 1796 1846"><t-x s="16" w="25">File</t-x><t-x s="16" w="46">Home</t-x><t-x s="16" w="43">Insert</t-x><t-x s="16" w="93">Page Layout</t-x><t-x s="16" w="69">Formulas</t-x><t-x s="16" w="35">Data</t-x><t-x s="16" w="52">Review</t-x><t-x s="16" w="36">View</t-x><t-x s="16" w="35">Help</t-x><t-x s="16" w="60">Acrobat</t-x><div class="bt"><i-c n="comment"></i-c></div><div class="bt"><i-c n="share"></i-c></div></x-row>
<div class="sh"></div>
<div class="fb"><div class="bx" style="width:125px;margin-left:6px"><x-row h="28" o="938" at="945 1048"><t-x w="18" s="15">D1</t-x><i-c n="tri" style="color:#777"></i-c></x-row></div><x-row h="30" at="16" style="width:37px"><i-c n="vdots"></i-c></x-row><div class="bx" style="width:135px"><x-row h="28" o="1102" at="1116 1161 1207"><i-c n="fxx"></i-c><i-c n="fxc"></i-c><span class="fx">fx</span></x-row></div><div class="bx" style="width:652px;margin-left:3px"><x-row h="28" o="1242" at="1255 1879"><t-x w="47" s="15">pcorr1</t-x><i-c n="chev" style="color:#666"></i-c></x-row></div></div>
<div class="body"><sheet-grid></sheet-grid><div class="vs"><div class="b" style="height:20px"><i-c n="triU"></i-c></div><div class="b" style="height:659px;margin-top:-1px"></div><div style="flex:1;background:#dadada"></div><div class="b" style="height:19px"><i-c n="triD"></i-c></div></div></div>
<x-row class="tb" al="start" h="29" o="931" at="959 988 1034 1359 1509.500 1528"><i-c n="triL" style="color:#bbb;margin-top:9px"></i-c><i-c n="triR" style="color:#bbb;margin-top:9px"></i-c><div class="tab"><t-x w="268" s="15">OPLSDA_discriminating_variables</t-x></div><i-c n="plusc" style="margin-top:4px"></i-c><i-c n="vdots" style="margin-top:7px"></i-c><div class="hs" style="margin-top:4px"><div class="b" style="width:19px;height:19px"><i-c n="triL"></i-c></div><div class="b" style="width:276px;margin-left:-1px;height:19px"></div><div style="flex:1;background:#dadada"></div><div class="b" style="width:19px;height:19px"><i-c n="triR"></i-c></div></div></x-row>
<x-row class="stt" h="27" o="931" at="940 1170 1318 1393 1515 1581 1631 1672 1846"><t-x s="13" w="36">Ready</t-x><t-x s="13" w="128">Average: 0.095260234</t-x><t-x s="13" w="55">Count: 40</t-x><t-x s="13" w="98">Sum: 3.71514912</t-x><div class="vb"><i-c n="vgrid"></i-c></div><i-c n="vpage"></i-c><i-c n="vbreak"></i-c><i-c n="slider"></i-c><t-x s="13" w="31" c="#777">100%</t-x></x-row>`}
});

const APPS=[['texp',510,'b'],['chrome',571,'b'],['kraken',634,'b'],['rr',695,'b'],['appw',757,'o'],['photos',820,'p'],['xl',881,'b']];
def('task-bar',class extends Base{
  css(){return `:host{display:flex;position:absolute;left:0;top:1030px;width:1920px;height:50px;background:#1c1c1c;color:#fff}.st{width:60px;display:flex;align-items:center;justify-content:center}.se{box-sizing:border-box;width:430px;height:50px;border:3px solid #b1b1b1;background:#fff;color:#2b2b2b}
.ap{width:62px;height:50px;display:flex;flex-direction:column;align-items:center;justify-content:space-between;box-sizing:border-box}.ap .i{flex:1;display:flex;align-items:center;padding-top:3px}.u{width:51px;height:3px;background:#76b9ed}
.o{background:linear-gradient(90deg,#a65c24 56px,#7d4318 56px,#7d4318 57px,#a65c24 57px);width:61px}.o .u{background:#ff7a0a;width:61px}.p{background:#4a4a4a;width:61px;margin-left:1px}.p .u{width:61px}.apps{display:flex;padding-left:3px;width:908px}.clk{display:flex;flex-direction:column;align-items:center;gap:4px}`}
  html(){return `<div class="st"><i-c n="win"></i-c></div><div class="se"><x-row h="44" o="63" at="75 110"><i-c n="bigmag"></i-c><t-x w="164" s="17" style="margin-top:1px">Type here to search</t-x></x-row></div>
<div class="apps">${APPS.map((a,i)=>`<div class="ap ${a[2]}"><div class="i"><i-c n="${a[0]}"></i-c></div><div class="u" style="${i==0?'background:linear-gradient(90deg,#76b9ed 40px,#4f7ea3 40px)':''}"></div></div>`).join('')}</div>
<x-row h="50" o="1401" at="1401 1439 1477 1604 1632 1665 1692 1725 1770 1869 1914"><i-c n="weather"></i-c><t-x w="27" s="17" style="margin-top:2px">5°C</t-x><t-x w="95" s="17" style="margin-top:2px">Partly sunny</t-x><i-c n="caret"></i-c><i-c n="batt"></i-c><i-c n="wifi" style="margin-top:2px"></i-c><i-c n="vol"></i-c><t-x w="29" s="15">ENG</t-x><div class="clk"><t-x w="35">14:26</t-x><t-x w="76">08/12/2022</t-x></div><i-c n="notif" style="margin-top:-1px"></i-c><div style="width:1px;height:50px;background:#666"></div></x-row>`}
});
/* slivers of the window that lies behind the others */
def('back-window',class extends Base{
  css(){return `:host{display:flex;justify-content:space-between;height:1030px}.l,.r{width:20px;overflow:hidden}.r{width:18px}.a{height:54px;background:#fff}.b{height:24px;background:#f4f7f9;border-bottom:1px solid #d0d6dc;display:flex;align-items:center}.c{height:951px;background:#e6e8ea}.d{height:951px;background:#f5f8fa}.d div{border:1px solid #d4d8dc;border-left:0;width:8px;background:#eef1f4;box-sizing:border-box;display:flex;align-items:center}.q{width:20px;height:20px;border-radius:50%;background:#5b9bd5;margin-left:2px}`}
  html(){return `<div class="l"><div class="a"><div style="height:4px"></div><div class="q"></div></div><div class="b"></div><div class="c"></div></div>
<div class="r"><div class="a"></div><div class="b"><i-c n="tri" style="margin-left:3px;transform:scale(.7)"></i-c></div><div class="d"><div style="height:0;border:0;margin-top:7px"></div><div style="height:24px;background:#e6e8ea"></div><div style="height:22px;background:#fff;border-top:0"><i-c n="tri" style="margin-left:-1px;transform:scale(.7)"></i-c></div><div style="height:24px;border-top:0"></div><div style="height:18px;border-top:0"></div><div style="height:143px;background:#cbcbcb"></div><div style="height:92px;background:#f4f4f4"></div><div style="height:24px"><i-c n="tri" style="margin-left:-1px;transform:scale(.7)"></i-c></div><div style="height:590px;background:#fdfdfd"></div></div></div>`}
});
def('desk-top',class extends Base{
  css(){return ':host{display:block;position:relative;width:1920px;height:1080px;overflow:hidden}'}
  html(){return '<back-window></back-window><file-explorer></file-explorer><photo-viewer></photo-viewer><excel-window></excel-window><task-bar></task-bar>'}
});
</script>
</body>
</html>
